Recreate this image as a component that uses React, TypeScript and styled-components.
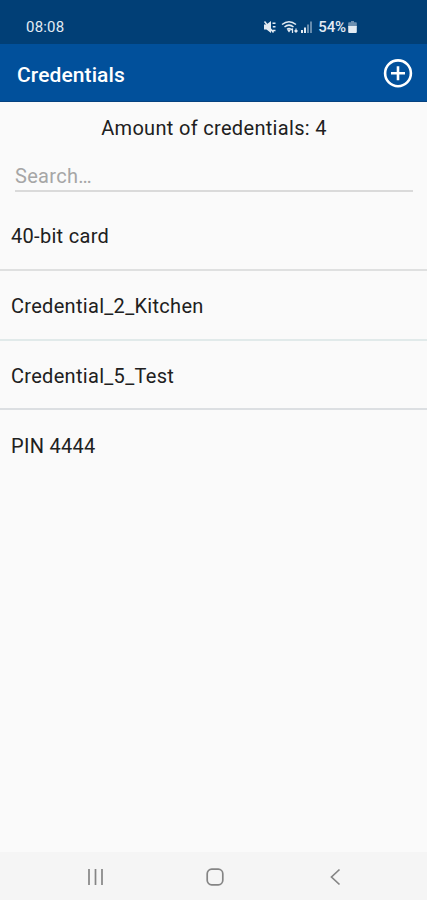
import React from "react";
import styled, { createGlobalStyle } from "styled-components";

const GlobalStyle = createGlobalStyle`
  * { box-sizing: border-box; }
  body { margin: 0; background: #fafafa; font-family: Roboto, "Liberation Sans", sans-serif; }
`;

const Screen = styled.div`
  display: flex;
  flex-direction: column;
  width: 427px;
  height: 900px;
  overflow: hidden;
  background: #fafafa;
`;

const StatusBar = styled.header`
  display: flex;
  align-items: center;
  justify-content: space-between;
  height: 44px;
  padding: 10px 70px 0 26px;
  background: #013f76;
  color: #e3ebf3;
`;

const Clock = styled.time`
  font-size: 15px;
  font-weight: 400;
  line-height: 20px;
  letter-spacing: 0.2px;
`;

const StatusIcons = styled.div`
  display: flex;
  align-items: center;
`;

const IconSlot = styled.span<{ $gap: number }>`
  display: flex;
  margin-right: ${(p) => p.$gap}px;
`;

const Battery = styled.span`
  font-size: 15px;
  font-weight: 500;
  line-height: 20px;
  letter-spacing: -0.1px;
`;

const AppBar = styled.div`
  display: flex;
  align-items: center;
  justify-content: space-between;
  height: 58px;
  padding: 1px 14px 0 17px;
  background: #01509b;
  border-bottom: 1px solid #054280;
  color: #fff;
`;

const Title = styled.h1`
  margin: 0;
  padding-top: 3px;
  font-size: 21px;
  font-weight: 500;
  line-height: 28px;
  letter-spacing: 0.1px;
`;

const AddButton = styled.button`
  display: flex;
  padding: 0;
  border: 0;
  background: none;
  color: #fff;
`;

const Amount = styled.p`
  margin: 12px 0 0;
  padding-left: 1px;
  text-align: center;
  font-size: 20px;
  line-height: 28px;
  letter-spacing: 0.32px;
  color: #202020;
`;

const SearchInput = styled.input`
  height: 32px;
  margin: 18px 14px 9px 15px;
  padding: 1px 0 0;
  border: 0;
  border-bottom: 2px solid #dadada;
  border-radius: 0;
  outline: 0;
  background: none;
  font: 400 20px Roboto, sans-serif;
  letter-spacing: 0.3px;
  color: #202020;
  &::placeholder { color: #a6a6a6; opacity: 1; }
`;

const List = styled.ul`
  flex: 1;
  margin: 0;
  padding: 0;
  list-style: none;
`;

const Row = styled.li<{ $line?: string }>`
  display: flex;
  align-items: center;
  height: 69.8px;
  padding: 3px 11px 0;
  border-bottom: 2px solid ${(p) => p.$line ?? "transparent"};
  font-size: 20px;
  line-height: 28px;
  letter-spacing: 0.3px;
  color: #202020;
`;

const NavBar = styled.nav`
  display: grid;
  grid-template-columns: repeat(3, 120px);
  justify-content: center;
  align-items: center;
  justify-items: center;
  height: 48px;
  padding: 2px 0 0 3px;
  background: #f5f5f5;
  color: #858585;
`;

const credentials = [
  { name: "40-bit card", line: "#dfe0e0" },
  { name: "Credential_2_Kitchen", line: "#e1eaea" },
  { name: "Credential_5_Test", line: "#dcdfe2" },
  { name: "PIN 4444" },
];

const MutedIcon = () => (
  <svg width="14" height="14" viewBox="0 0 14 14" fill="currentColor">
    <path d="M1 4.500h2.500L8 1v12L3.500 9.500H1z" />
    <path d="M1.500 1.500l9 11M9.500 3.200h3M9.800 6.800h2.700M9.500 10.500h3" stroke="currentColor" strokeWidth="1.500" />
  </svg>
);

const WifiIcon = () => (
  <svg width="18" height="14" viewBox="0 0 18 14" fill="none" stroke="currentColor" strokeWidth="1.500">
    <path d="M1 4.500Q8 -1.200 15 4.500M3.500 7Q8 3.200 12.500 7M6 9.300Q8 7.700 10 9.300" />
    <path d="M8 9l1.700 1.200L8 12.500 6.300 10.200z" fill="currentColor" stroke="none" />
    <path d="M11.500 13V8.500M10 10l1.500-1.700M15 8.500V12M13.500 10.500l1.500 1.700 1.500-1.700" strokeWidth="1.200" />
  </svg>
);

const SignalIcon = () => (
  <svg width="13" height="14" viewBox="0 0 13 14" fill="currentColor">
    <path d="M1 10h2v3H1zM4 7.500h2V13H4z" />
    <path d="M7 4.500h2V13H7zM10 1.500h2V13h-2z" opacity=".45" />
  </svg>
);

const BatteryIcon = () => (
  <svg width="9" height="13" viewBox="0 0 9 13" fill="currentColor">
    <path d="M3 0h3v1.200h2a.8.8 0 0 1 .8.800V6H.2V2A.8.8 0 0 1 1 1.200h2z" opacity=".48" />
    <path d="M.2 5h8.600v6a1 1 0 0 1-1 1H1.200a1 1 0 0 1-1-1z" />
  </svg>
);

export default function App() {
  return (
    <>
      <GlobalStyle />
      <Screen>
        <StatusBar>
          <Clock>08:08</Clock>
          <StatusIcons>
            <IconSlot $gap={4}><MutedIcon /></IconSlot>
            <IconSlot $gap={1}><WifiIcon /></IconSlot>
            <IconSlot $gap={5}><SignalIcon /></IconSlot>
            <IconSlot $gap={2}><Battery>54%</Battery></IconSlot>
            <BatteryIcon />
          </StatusIcons>
        </StatusBar>
        <AppBar>
          <Title>Credentials</Title>
          <AddButton aria-label="Add credential">
            <svg width="30" height="30" viewBox="0 0 30 30" fill="none" stroke="currentColor" strokeWidth="2.600">
              <circle cx="15" cy="15.300" r="12.900" />
              <path d="M15 8.300v14M8 15.300h14" />
            </svg>
          </AddButton>
        </AppBar>
        <Amount>Amount of credentials: 4</Amount>
        <SearchInput placeholder="Search…" aria-label="Search" />
        <List>
          {credentials.map((c) => (
            <Row key={c.name} $line={c.line}>{c.name}</Row>
          ))}
        </List>
        <NavBar>
          <svg width="18" height="18" viewBox="0 0 18 18" stroke="currentColor" strokeWidth="1.700">
            <path d="M3 1v16M9.500 1v16M16 1v16" />
          </svg>
          <svg width="18" height="18" viewBox="0 0 18 18" fill="none" stroke="currentColor" strokeWidth="1.700">
            <rect x="1.200" y="1.200" width="15.600" height="15.600" rx="4.500" />
          </svg>
          <svg width="18" height="18" viewBox="0 0 18 18" fill="none" stroke="currentColor" strokeWidth="1.700">
            <path d="M13.500 1.500L5.500 9l8 7.500" />
          </svg>
        </NavBar>
      </Screen>
    </>
  );
}
